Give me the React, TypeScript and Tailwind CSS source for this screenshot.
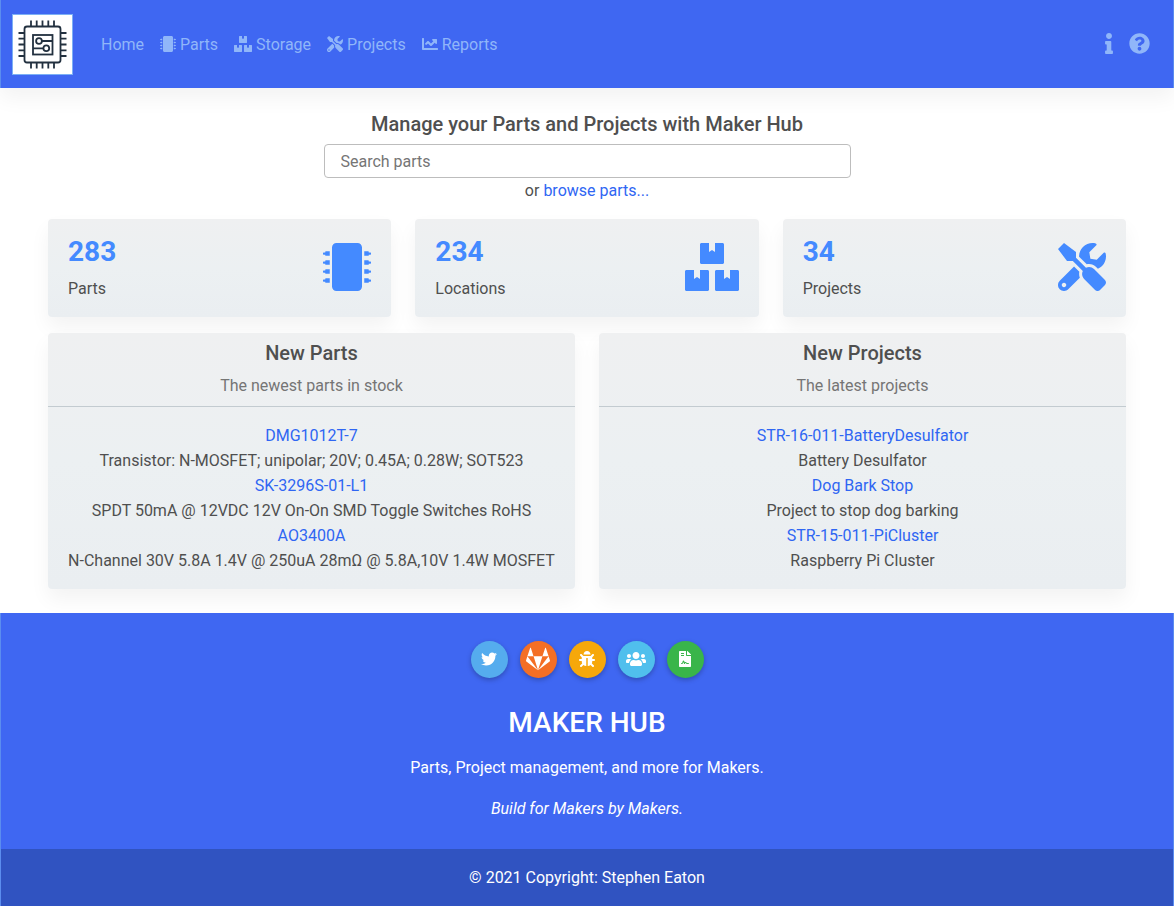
import type { ReactNode } from "react";
import {
  FaBoxes,
  FaBug,
  FaChartLine,
  FaFileContract,
  FaGitlab,
  FaInfo,
  FaMicrochip,
  FaQuestionCircle,
  FaTools,
  FaTwitter,
  FaUsers,
} from "react-icons/fa";

type Entry = { name: string; detail: string };

const newParts: Entry[] = [
  { name: "DMG1012T-7", detail: "Transistor: N-MOSFET; unipolar; 20V; 0.45A; 0.28W; SOT523" },
  { name: "SK-3296S-01-L1", detail: "SPDT 50mA @ 12VDC 12V On-On SMD Toggle Switches RoHS" },
  { name: "AO3400A", detail: "N-Channel 30V 5.8A 1.4V @ 250uA 28mΩ @ 5.8A,10V 1.4W MOSFET" },
];

const newProjects: Entry[] = [
  { name: "STR-16-011-BatteryDesulfator", detail: "Battery Desulfator" },
  { name: "Dog Bark Stop", detail: "Project to stop dog barking" },
  { name: "STR-15-011-PiCluster", detail: "Raspberry Pi Cluster" },
];

function Logo() {
  return (
    <svg viewBox="0 0 59 59" className="h-full w-full" fill="none" stroke="#22303f" strokeWidth="1.8" aria-hidden="true">
      <rect x="11.5" y="11.5" width="36" height="36" rx="2.5" />
      <rect x="20" y="20" width="19.5" height="19.5" />
      <path d="M18 5.5v6M23.7 5.5v6M29.5 5.5v6M35.3 5.5v6M41 5.5v6M18 47.5v6M23.7 47.5v6M29.5 47.5v6M35.3 47.5v6M41 47.5v6" />
      <path d="M5.5 18h6M5.5 23.7h6M5.5 29.5h6M5.5 35.3h6M5.5 41h6M47.5 18h6M47.5 23.7h6M47.5 29.5h6M47.5 35.3h6M47.5 41h6" />
      <circle cx="26" cy="26" r="2.9" />
      <circle cx="33.3" cy="33.3" r="2.9" />
      <path d="M28.9 26h10.6M20 33.3h10.4" />
    </svg>
  );
}

function NavItem({ icon, children }: { icon?: ReactNode; children: ReactNode }) {
  return (
    <a href="#" className="flex items-center gap-1 px-2">
      {icon}
      <span className="pt-0.5">{children}</span>
    </a>
  );
}

function Stat({ value, label, icon }: { value: number; label: string; icon: ReactNode }) {
  return (
    <section className="flex items-start justify-between rounded bg-linear-to-b from-[#eff0f1] via-[#ecf0f2] to-[#eaeef1] px-5 pt-[17px] pb-[15px] shadow-[0_10px_20px_rgba(0,0,0,0.05)]">
      <div>
        <p className="mb-2 text-[28px] leading-8 font-bold text-[#448aff]">{value}</p>
        <p className="leading-[26px]">{label}</p>
      </div>
      <div className="pt-[7px] text-5xl text-[#448aff]">{icon}</div>
    </section>
  );
}

function ListCard({ title, subtitle, entries }: { title: string; subtitle: string; entries: Entry[] }) {
  return (
    <section className="rounded bg-linear-to-b from-[#eff0f1] via-[#ecf0f2] to-[#eaeef1] text-center shadow-[0_10px_20px_rgba(0,0,0,0.05)]">
      <header className="border-b border-[#c3cbd0] pt-2 pb-2">
        <h2 className="mb-2 text-xl leading-6 font-medium">{title}</h2>
        <p className="leading-[25px] text-[#757575]">{subtitle}</p>
      </header>
      <dl className="px-4 py-4 leading-[25px]">
        {entries.map((entry) => (
          <div key={entry.name}>
            <dt>
              <a href="#" className="text-[#2f66f3]">{entry.name}</a>
            </dt>
            <dd>{entry.detail}</dd>
          </div>
        ))}
      </dl>
    </section>
  );
}

function RoundLink({ label, color, children }: { label: string; color: string; children: ReactNode }) {
  return (
    <a
      href="#"
      aria-label={label}
      className={`flex size-[37px] items-center justify-center rounded-full pb-px text-base shadow-[0_2px_5px_rgba(0,0,0,0.25)] ${color}`}
    >
      {children}
    </a>
  );
}

export default function App() {
  return (
    <div className="bg-white font-['Roboto',sans-serif] text-base text-[#4f4f4f]">
      <nav className="flex h-[88px] items-center border-x border-[#5b8def] bg-[#3f67f2] px-[11px] text-[#90b6f9] shadow-[0_10px_20px_rgba(0,0,0,0.05)]">
        <a href="#" aria-label="Maker Hub" className="mr-5 size-[61px] border border-[#7cb0f5] bg-white">
          <Logo />
        </a>
        <div className="flex flex-1 items-center">
          <NavItem>Home</NavItem>
          <NavItem icon={<FaMicrochip />}>Parts</NavItem>
          <NavItem icon={<FaBoxes className="h-4 w-[18px]" />}>Storage</NavItem>
          <NavItem icon={<FaTools />}>Projects</NavItem>
          <NavItem icon={<FaChartLine />}>Reports</NavItem>
        </div>
        <div className="flex items-center gap-4 pr-3 pb-0.5 text-[21px]">
          <a href="#" aria-label="About"><FaInfo className="w-2" /></a>
          <a href="#" aria-label="Help"><FaQuestionCircle /></a>
        </div>
      </nav>

      <main className="px-12 pt-6 pb-6">
        <div className="mx-auto mb-4 flex w-1/2 flex-col px-1.5 text-center">
          <h1 className="mb-2 text-xl leading-6 font-medium">
            <label htmlFor="search">Manage your Parts and Projects with Maker Hub</label>
          </h1>
          <input
            id="search"
            type="search"
            placeholder="Search parts"
            className="h-[34px] rounded border border-[#bdbdbd] bg-white px-4 outline-none placeholder:text-[#757575]"
          />
          <p className="leading-[25px]">
            or <a href="#" className="text-[#2f66f3]">browse parts...</a>
          </p>
        </div>

        <div className="mb-4 grid grid-cols-3 gap-6">
          <Stat value={283} label="Parts" icon={<FaMicrochip />} />
          <Stat value={234} label="Locations" icon={<FaBoxes className="h-12 w-[54px]" />} />
          <Stat value={34} label="Projects" icon={<FaTools />} />
        </div>

        <div className="grid grid-cols-2 gap-6">
          <ListCard title="New Parts" subtitle="The newest parts in stock" entries={newParts} />
          <ListCard title="New Projects" subtitle="The latest projects" entries={newProjects} />
        </div>
      </main>

      <footer className="border-x border-[#5b8def] bg-[#3f67f2] text-center text-white">
        <div className="flex flex-col items-center pt-7 pb-7">
          <div className="mb-7 flex gap-3">
            <RoundLink label="Twitter" color="bg-[#55acee]"><FaTwitter /></RoundLink>
            <RoundLink label="GitLab" color="bg-[#f46f25]"><FaGitlab className="size-6" /></RoundLink>
            <RoundLink label="Report a bug" color="bg-[#f6a80b]"><FaBug /></RoundLink>
            <RoundLink label="Community" color="bg-[#50bfed]"><FaUsers className="h-4 w-5" /></RoundLink>
            <RoundLink label="License" color="bg-[#39b54a]"><FaFileContract /></RoundLink>
          </div>
          <h2 className="mb-[15px] text-[28px] leading-[34px] font-medium">MAKER HUB</h2>
          <p className="mb-4 leading-[25px]">Parts, Project management, and more for Makers.</p>
          <p className="leading-[25px] italic">Build for Makers by Makers.</p>
        </div>
        <p className="bg-[#3053c1] py-4 leading-[25px]">© 2021 Copyright: Stephen Eaton</p>
      </footer>
    </div>
  );
}
